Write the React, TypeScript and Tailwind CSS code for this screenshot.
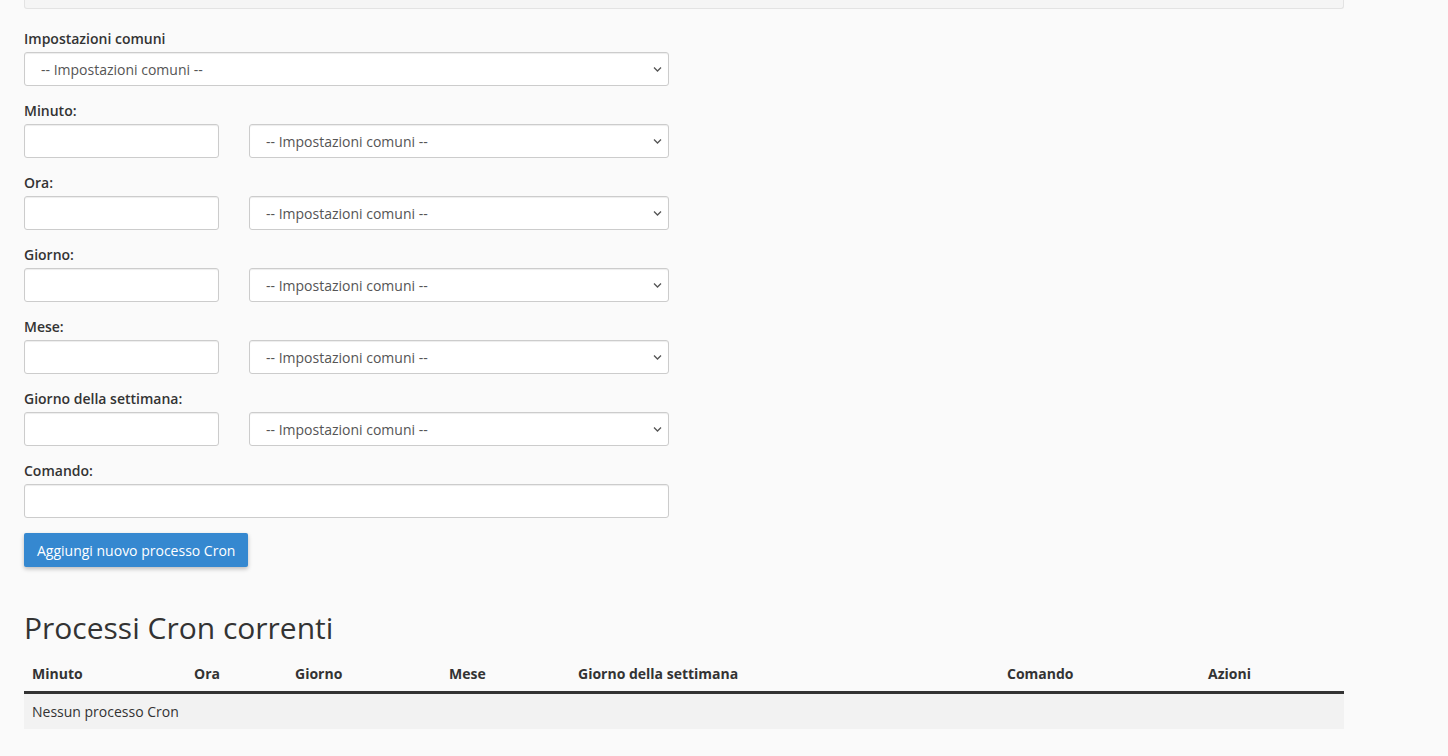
import React from "react";

const Chevron = () => (
  <svg width="11" height="11" viewBox="0 0 11 11" className="pointer-events-none absolute right-[6px] top-1/2 -translate-y-1/2" fill="none" stroke="#555" strokeWidth="1.3">
    <path d="M2 4 L5.5 7.5 L9 4" />
  </svg>
);

const Select = ({ className = "" }: { className?: string }) => (
  <div className={`relative h-[34px] ${className}`}>
    <select className="h-full w-full appearance-none rounded-[3px] border border-[#cccccc] bg-white pl-[16px] text-[14px] text-[#555] shadow-[inset_0_1px_1px_rgba(0,0,0,0.075)] outline-none">
      <option>-- Impostazioni comuni --</option>
    </select>
    <Chevron />
  </div>
);

const Input = ({ className = "" }: { className?: string }) => (
  <input
    type="text"
    className={`h-[34px] rounded-[3px] border border-[#cccccc] bg-white px-3 text-[14px] text-[#555] shadow-[inset_0_1px_1px_rgba(0,0,0,0.075)] outline-none ${className}`}
  />
);

const Label = ({ children }: { children: React.ReactNode }) => (
  <label className="mb-[3px] block h-[21px] text-[14px] font-semibold leading-[22px] text-[#333]">{children}</label>
);

const rows = ["Minuto:", "Ora:", "Giorno:", "Mese:", "Giorno della settimana:"];

const cols: [string, number][] = [
  ["Minuto", 162],
  ["Ora", 101],
  ["Giorno", 154],
  ["Mese", 129],
  ["Giorno della settimana", 429],
  ["Comando", 201],
  ["Azioni", 144],
];

export default function App() {
  return (
    <div className="min-h-[756px] bg-[#fafafa] text-[#333]" style={{ fontFamily: '"Open Sans", "Liberation Sans", sans-serif' }}>
      <div className="w-[1320px] pl-[24px] box-content">
        <div className="h-[9px] rounded-b-[3px] border-x border-b border-[#e3e3e3] bg-[#f5f5f5]" />

        <form className="mt-[19px] w-[645px]">
          <div className="mb-[14px]">
            <Label>Impostazioni comuni</Label>
            <Select />
          </div>
          {rows.map((r) => (
            <div key={r} className="mb-[14px]">
              <Label>{r}</Label>
              <div className="flex gap-[30px]">
                <Input className="w-[195px]" />
                <Select className="flex-1" />
              </div>
            </div>
          ))}
          <div className="mb-[15px]">
            <Label>Comando:</Label>
            <Input className="w-full" />
          </div>
          <button
            type="button"
            className="h-[34px] rounded-[2px] bg-[#3588d0] px-[13px] text-[14px] text-white shadow-[0_2px_4px_rgba(0,0,0,0.25)]"
          >
            Aggiungi nuovo processo Cron
          </button>
        </form>

        <h2 className="mt-[41px] text-[30px] font-normal leading-[40px] text-[#333]">Processi Cron correnti</h2>

        <table className="mt-[8px] w-[1320px] border-collapse text-[14px]">
          <thead>
            <tr className="border-b-[3px] border-[#333]">
              {cols.map(([c, w]) => (
                <th key={c} style={{ width: w }} className="h-[36px] px-[8px] text-left font-bold align-middle text-[#333]">
                  {c}
                </th>
              ))}
            </tr>
          </thead>
          <tbody>
            <tr className="bg-[#f2f2f2]">
              <td colSpan={7} className="h-[37px] px-[8px] align-middle text-[#333]">
                Nessun processo Cron
              </td>
            </tr>
          </tbody>
        </table>
      </div>
    </div>
  );
}
